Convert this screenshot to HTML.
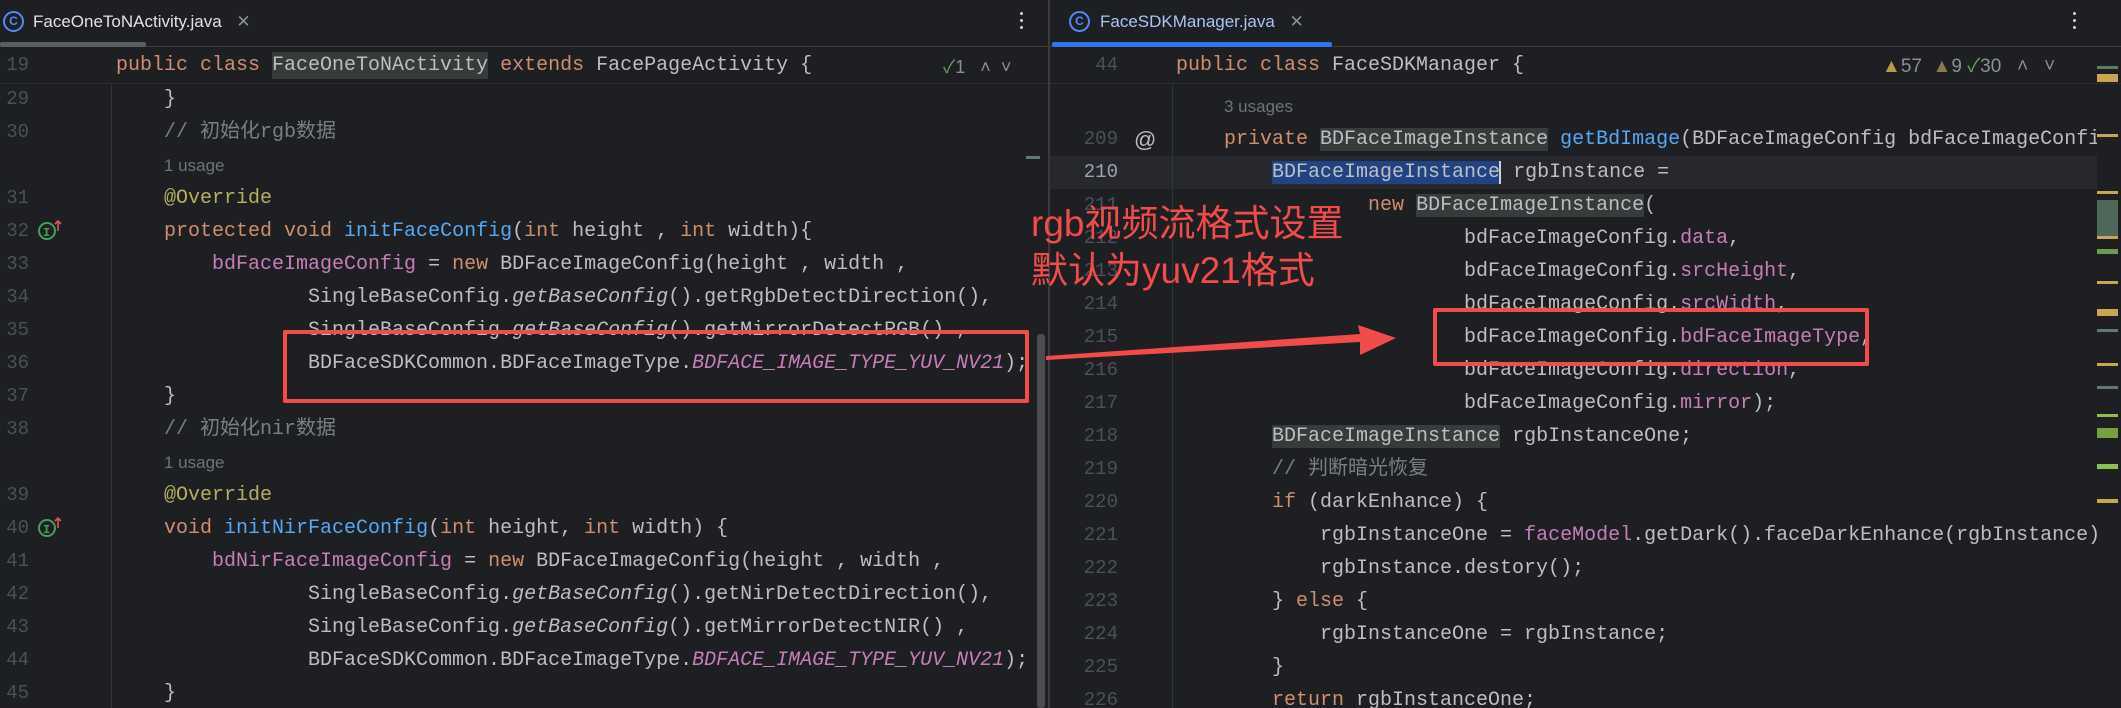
<!DOCTYPE html>
<html><head><meta charset="utf-8">
<style>
body{margin:0;width:2121px;height:708px;background:#1e1f22;overflow:hidden;position:relative;font-family:"Liberation Sans","Noto Sans CJK SC",sans-serif}
.pane{position:absolute;top:0;height:708px;overflow:hidden;background:#1e1f22}
.l{position:absolute;white-space:pre;font-family:"Liberation Mono","Noto Sans CJK SC",monospace;font-size:20px;line-height:33px;height:33px;color:#bcbec4}
.n{position:absolute;font-family:"Liberation Mono",monospace;font-size:19px;line-height:33px;color:#4b5059;text-align:right;width:40px}
.u{position:absolute;font-size:17px;line-height:33px;color:#6f737a;white-space:pre}
.k{color:#cf8e6d}.f{color:#56a8f5}.c{color:#7a7e85}.a{color:#b3ae60}.p{color:#c77dbb}.pi{color:#c77dbb;font-style:italic}.i{font-style:italic}
.h{background:#373b39}.s{background:#214283}
.tab{position:absolute;top:0;height:46px;font-size:17px;line-height:44px;color:#dfe1e5}
.ic{position:absolute;width:17px;height:17px;border:2px solid #548af7;border-radius:50%;color:#548af7;font-size:12px;line-height:17px;text-align:center;font-weight:bold}
.dots{position:absolute;top:12px;width:4px}
.dots i{display:block;width:3px;height:3px;background:#cfd1d6;border-radius:50%;margin-bottom:4px}
.red{position:absolute;border:4px solid #f24b4b;border-radius:2px}
.mk{position:absolute;left:2097px;width:21px;height:3px}
</style></head><body>

<!-- LEFT PANE -->
<div class="pane" style="left:0;width:1048px">
  <div style="position:absolute;left:0;top:46px;width:1048px;height:1px;background:#393b40"></div>
  <div style="position:absolute;left:0;top:42px;width:146px;height:5px;background:#5a5d63;border-radius:2px"></div>
  <div class="ic" style="left:3px;top:11px">C</div>
  <div class="tab" style="left:33px">FaceOneToNActivity.java <span style="color:#8c8f96;margin-left:10px">✕</span></div>
  <div class="dots" style="left:1020px"><i></i><i></i><i></i></div>

  <div style="position:absolute;left:111px;top:84px;width:1px;height:624px;background:#313438"></div>

  <div class="n" style="left:-11px;top:83px">29</div><div class="l" style="left:116px;top:83px">    }</div>
  <div class="n" style="left:-11px;top:116px">30</div><div class="l" style="left:116px;top:116px"><span class="c">    // 初始化rgb数据</span></div>
  <div class="u" style="left:164px;top:149px">1 usage</div>
  <div class="n" style="left:-11px;top:182px">31</div><div class="l" style="left:116px;top:182px">    <span class="a">@Override</span></div>
  <div class="n" style="left:-11px;top:215px">32</div><div class="l" style="left:116px;top:215px">    <span class="k">protected void </span><span class="f">initFaceConfig</span>(<span class="k">int</span> height , <span class="k">int</span> width){</div>
  <div class="n" style="left:-11px;top:248px">33</div><div class="l" style="left:116px;top:248px">        <span class="p">bdFaceImageConfig</span> = <span class="k">new</span> BDFaceImageConfig(height , width ,</div>
  <div class="n" style="left:-11px;top:281px">34</div><div class="l" style="left:116px;top:281px">                SingleBaseConfig.<span class="i">getBaseConfig</span>().getRgbDetectDirection(),</div>
  <div class="n" style="left:-11px;top:314px">35</div><div class="l" style="left:116px;top:314px">                SingleBaseConfig.<span class="i">getBaseConfig</span>().getMirrorDetectRGB() ,</div>
  <div class="n" style="left:-11px;top:347px">36</div><div class="l" style="left:116px;top:347px">                BDFaceSDKCommon.BDFaceImageType.<span class="pi">BDFACE_IMAGE_TYPE_YUV_NV21</span>);</div>
  <div class="n" style="left:-11px;top:380px">37</div><div class="l" style="left:116px;top:380px">    }</div>
  <div class="n" style="left:-11px;top:413px">38</div><div class="l" style="left:116px;top:413px"><span class="c">    // 初始化nir数据</span></div>
  <div class="u" style="left:164px;top:446px">1 usage</div>
  <div class="n" style="left:-11px;top:479px">39</div><div class="l" style="left:116px;top:479px">    <span class="a">@Override</span></div>
  <div class="n" style="left:-11px;top:512px">40</div><div class="l" style="left:116px;top:512px">    <span class="k">void </span><span class="f">initNirFaceConfig</span>(<span class="k">int</span> height, <span class="k">int</span> width) {</div>
  <div class="n" style="left:-11px;top:545px">41</div><div class="l" style="left:116px;top:545px">        <span class="p">bdNirFaceImageConfig</span> = <span class="k">new</span> BDFaceImageConfig(height , width ,</div>
  <div class="n" style="left:-11px;top:578px">42</div><div class="l" style="left:116px;top:578px">                SingleBaseConfig.<span class="i">getBaseConfig</span>().getNirDetectDirection(),</div>
  <div class="n" style="left:-11px;top:611px">43</div><div class="l" style="left:116px;top:611px">                SingleBaseConfig.<span class="i">getBaseConfig</span>().getMirrorDetectNIR() ,</div>
  <div class="n" style="left:-11px;top:644px">44</div><div class="l" style="left:116px;top:644px">                BDFaceSDKCommon.BDFaceImageType.<span class="pi">BDFACE_IMAGE_TYPE_YUV_NV21</span>);</div>
  <div class="n" style="left:-11px;top:677px">45</div><div class="l" style="left:116px;top:677px">    }</div>

  <svg style="position:absolute;left:36px;top:219px" width="30" height="24"><circle cx="11" cy="12" r="8" fill="none" stroke="#4a9c5a" stroke-width="2"/><text x="7" y="17" font-family="Liberation Mono" font-size="12" fill="#4a9c5a" font-weight="bold">I</text><path d="M22 12V2M19 5l3-3 3 3" stroke="#e05555" stroke-width="1.6" fill="none"/></svg>
  <svg style="position:absolute;left:36px;top:516px" width="30" height="24"><circle cx="11" cy="12" r="8" fill="none" stroke="#4a9c5a" stroke-width="2"/><text x="7" y="17" font-family="Liberation Mono" font-size="12" fill="#4a9c5a" font-weight="bold">I</text><path d="M22 12V2M19 5l3-3 3 3" stroke="#e05555" stroke-width="1.6" fill="none"/></svg>

  <div style="position:absolute;left:0;top:47px;width:1048px;height:36px;background:#1e1f22;border-bottom:1px solid #2b2d30"></div>
  <div class="n" style="left:-11px;top:49px">19</div>
  <div class="l" style="left:116px;top:49px"><span class="k">public class </span><span style="background:#373b39;padding:2px 0">FaceOneToNActivity</span> <span class="k">extends</span> FacePageActivity {</div>
  <div style="position:absolute;left:943px;top:52px;font-size:18px;color:#8c8f96;line-height:30px"><span style="color:#5fa05f">✓</span>1 &nbsp;&nbsp;˄ &nbsp;˅</div>

  <div style="position:absolute;left:1037px;top:334px;width:8px;height:374px;background:#4a4c50;border-radius:3px"></div>
  <div style="position:absolute;left:1026px;top:156px;width:14px;height:3px;background:#5d7a6a"></div>
</div>

<div style="position:absolute;left:1048px;top:0;width:2px;height:708px;background:#393b40"></div>

<!-- RIGHT PANE -->
<div class="pane" style="left:1050px;width:1071px">
  <div style="position:absolute;left:0;top:46px;width:1071px;height:1px;background:#393b40"></div>
  <div style="position:absolute;left:2px;top:42px;width:280px;height:5px;background:#3574f0;border-radius:2px"></div>
  <div class="ic" style="left:19px;top:11px">C</div>
  <div class="tab" style="left:50px;color:#a9c4f5">FaceSDKManager.java <span style="color:#8c8f96;margin-left:10px">✕</span></div>
  <div class="dots" style="left:1023px"><i></i><i></i><i></i></div>

  <div style="position:absolute;left:0;top:156px;width:1047px;height:33px;background:#26282e"></div>
  <div style="position:absolute;left:122px;top:84px;width:1px;height:624px;background:#313438"></div>

  <div class="u" style="left:174px;top:90px">3 usages</div>
  <div class="n" style="left:28px;top:123px">209</div><div style="position:absolute;left:84px;top:123px;font-size:22px;line-height:33px;color:#bcbec4">@</div>
  <div class="l" style="left:126px;top:123px">    <span class="k">private </span><span class="h">BDFaceImageInstance</span> <span class="f">getBdImage</span>(BDFaceImageConfig bdFaceImageConfig,</div>
  <div class="n" style="left:28px;top:156px;color:#a1a3ab">210</div><div class="l" style="left:126px;top:156px">        <span class="s">BDFaceImageInstance</span><span style="border-left:2px solid #ced0d6;margin-left:-1px"></span> rgbInstance =</div>
  <div class="n" style="left:28px;top:189px">211</div><div class="l" style="left:126px;top:189px">                <span class="k">new</span> <span class="h">BDFaceImageInstance</span>(</div>
  <div class="n" style="left:28px;top:222px">212</div><div class="l" style="left:126px;top:222px">                        bdFaceImageConfig.<span class="p">data</span>,</div>
  <div class="n" style="left:28px;top:255px">213</div><div class="l" style="left:126px;top:255px">                        bdFaceImageConfig.<span class="p">srcHeight</span>,</div>
  <div class="n" style="left:28px;top:288px">214</div><div class="l" style="left:126px;top:288px">                        bdFaceImageConfig.<span class="p">srcWidth</span>,</div>
  <div class="n" style="left:28px;top:321px">215</div><div class="l" style="left:126px;top:321px">                        bdFaceImageConfig.<span class="p">bdFaceImageType</span>,</div>
  <div class="n" style="left:28px;top:354px">216</div><div class="l" style="left:126px;top:354px">                        bdFaceImageConfig.<span class="p">direction</span>,</div>
  <div class="n" style="left:28px;top:387px">217</div><div class="l" style="left:126px;top:387px">                        bdFaceImageConfig.<span class="p">mirror</span>);</div>
  <div class="n" style="left:28px;top:420px">218</div><div class="l" style="left:126px;top:420px">        <span class="h">BDFaceImageInstance</span> rgbInstanceOne;</div>
  <div class="n" style="left:28px;top:453px">219</div><div class="l" style="left:126px;top:453px"><span class="c">        // 判断暗光恢复</span></div>
  <div class="n" style="left:28px;top:486px">220</div><div class="l" style="left:126px;top:486px">        <span class="k">if</span> (darkEnhance) {</div>
  <div class="n" style="left:28px;top:519px">221</div><div class="l" style="left:126px;top:519px">            rgbInstanceOne = <span class="p">faceModel</span>.getDark().faceDarkEnhance(rgbInstance);</div>
  <div class="n" style="left:28px;top:552px">222</div><div class="l" style="left:126px;top:552px">            rgbInstance.destory();</div>
  <div class="n" style="left:28px;top:585px">223</div><div class="l" style="left:126px;top:585px">        } <span class="k">else</span> {</div>
  <div class="n" style="left:28px;top:618px">224</div><div class="l" style="left:126px;top:618px">            rgbInstanceOne = rgbInstance;</div>
  <div class="n" style="left:28px;top:651px">225</div><div class="l" style="left:126px;top:651px">        }</div>
  <div class="n" style="left:28px;top:684px">226</div><div class="l" style="left:126px;top:684px">        <span class="k">return</span> rgbInstanceOne;</div>

  <div style="position:absolute;left:0;top:47px;width:1071px;height:36px;background:#1e1f22;border-bottom:1px solid #2b2d30"></div>
  <div class="n" style="left:28px;top:49px">44</div>
  <div class="l" style="left:126px;top:49px"><span class="k">public class </span>FaceSDKManager {</div>
  <div style="position:absolute;left:832px;top:52px;font-size:19px;color:#8c8f96;line-height:30px;white-space:pre"><span style="color:#b89b4a">▲</span>57  <span style="color:#8a7a4e">▲</span>9 <span style="color:#5fa05f">✓</span>30   ˄   ˅</div>

  <div style="position:absolute;left:1047px;top:84px;width:24px;height:624px;background:#1e1f22"></div>
</div>

<div class="mk" style="top:66px;background:#5d7a6a"></div>
<div class="mk" style="top:74px;height:8px;background:#c9a550"></div>
<div class="mk" style="top:134px;background:#c9a550"></div>
<div class="mk" style="top:191px;background:#c9a550"></div>
<div class="mk" style="top:200px;height:36px;background:#5d7a6a;opacity:.8"></div>
<div class="mk" style="top:236px;background:#c9a550"></div>
<div class="mk" style="top:249px;height:5px;background:#6a9a4a"></div>
<div class="mk" style="top:281px;background:#c9a550"></div>
<div class="mk" style="top:309px;height:7px;background:#c9a550"></div>
<div class="mk" style="top:329px;background:#5d7a6a"></div>
<div class="mk" style="top:363px;background:#c9a550"></div>
<div class="mk" style="top:386px;background:#5d7a6a"></div>
<div class="mk" style="top:414px;background:#8bc34a"></div>
<div class="mk" style="top:428px;height:10px;background:#8bc34a;opacity:.8"></div>
<div class="mk" style="top:464px;height:5px;background:#8bc34a"></div>
<div class="mk" style="top:499px;height:4px;background:#c9a550"></div>

<div class="red" style="left:283px;top:330px;width:738px;height:65px"></div>
<div class="red" style="left:1433px;top:308px;width:428px;height:50px"></div>
<svg style="position:absolute;left:0;top:0" width="2121" height="708">
  <polygon points="1046,356 1360,334 1358,325 1396,338 1360,355 1360,342 1046,360" fill="#f24b4b"/>
</svg>
<div style="position:absolute;left:1031px;top:200px;font-size:37px;line-height:47px;color:#f24b4b;font-family:'Liberation Sans','Noto Sans CJK SC',sans-serif;white-space:pre">rgb视频流格式设置
默认为yuv21格式</div>
</body></html>
